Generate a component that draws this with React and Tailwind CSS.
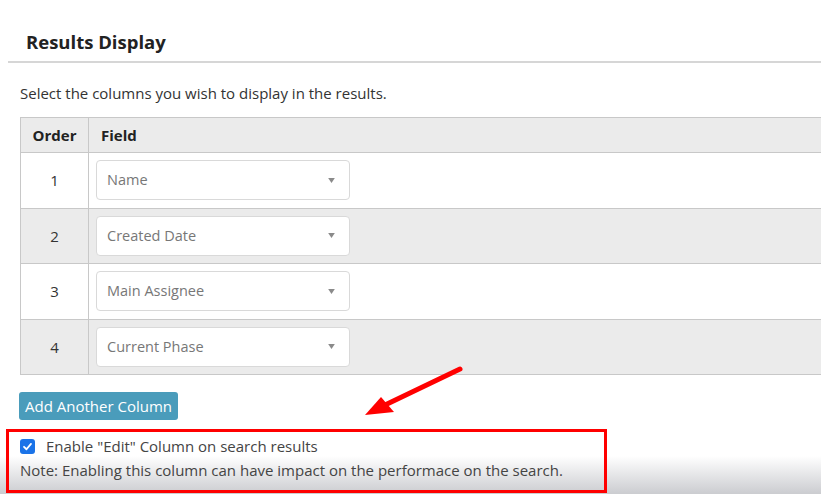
import { useState } from 'react';

const rows = [
  { order: 1, field: 'Name' },
  { order: 2, field: 'Created Date' },
  { order: 3, field: 'Main Assignee' },
  { order: 4, field: 'Current Phase' },
];

const FieldSelect = ({ value }) => (
  <div className="w-[254px] h-[40px] bg-white border border-[#d9d9d9] rounded-[4px] flex items-center justify-between pl-[10px] pr-[14px] text-[14.5px] text-[#777]">
    <span>{value}</span>
    <svg width="7" height="5" viewBox="0 0 8 6">
      <path d="M0 0 L8 0 L4 6 Z" fill="#8a8a8a" />
    </svg>
  </div>
);

export default function App() {
  const [editCol, setEditCol] = useState(true);

  return (
    <div
      className="relative w-[821px] h-[494px] overflow-hidden bg-white text-[#333]"
      style={{ fontFamily: '"Open Sans", "Liberation Sans", sans-serif' }}
    >
      {/* bottom shade */}
      <div className="pointer-events-none absolute left-0 right-0 bottom-0 h-[38px] bg-gradient-to-b from-transparent to-[#cbccd0]" />

      <div className="relative">
        {/* heading */}
        <div className="pl-[8px] pt-[30px]">
          <h2 className="pl-[18px] text-[18.5px] font-bold text-[#222] leading-[24px]">Results Display</h2>
          <div className="mt-[7px] h-[2px] bg-[#d6d6d6]" />
        </div>

        <div className="pl-[20px]">
          <p className="mt-[21px] text-[15px] leading-[18px] text-[#333]">
            Select the columns you wish to display in the results.
          </p>

          {/* columns table */}
          <div className="mt-[15px] w-[830px] border-t border-l border-[#c8c8c8]">
            <div className="flex h-[35px] bg-[#ebebeb] border-b border-[#c8c8c8] text-[15px] font-bold text-[#222]">
              <div className="w-[68px] border-r border-[#c8c8c8] flex items-center justify-center">Order</div>
              <div className="flex-1 flex items-center pl-[12px]">Field</div>
            </div>
            {rows.map((r, i) => (
              <div
                key={r.order}
                className={`flex h-[55.5px] border-b border-[#c8c8c8] ${i % 2 === 1 ? 'bg-[#ebebeb]' : 'bg-white'}`}
              >
                <div className="w-[68px] border-r border-[#c8c8c8] flex items-center justify-center text-[15px] text-[#333]">
                  {r.order}
                </div>
                <div className="flex-1 flex items-center pl-[7px]">
                  <FieldSelect value={r.field} />
                </div>
              </div>
            ))}
          </div>

          <button className="mt-[17px] -ml-[1px] h-[28px] w-[159px] rounded-[3px] bg-[#4a9cbb] text-white text-[15px] leading-none">
            Add Another Column
          </button>

          <label className="mt-[17px] flex items-center gap-[11px] text-[15px] leading-[18px] text-[#444] cursor-pointer" onClick={() => setEditCol(!editCol)}>
            <span className={`w-[15px] h-[15px] rounded-[3px] flex items-center justify-center ${editCol ? 'bg-[#1a73e8]' : 'bg-white border border-[#777]'}`}>
              {editCol && (
                <svg width="11" height="11" viewBox="0 0 12 12">
                  <path d="M2.2 6.3 L4.9 9 L9.8 3.2" fill="none" stroke="white" strokeWidth="2" strokeLinecap="round" strokeLinejoin="round" />
                </svg>
              )}
            </span>
            Enable "Edit" Column on search results
          </label>

          <p className="mt-[6px] text-[15px] leading-[18px] text-[#444]">
            Note: Enabling this column can have impact on the performace on the search.
          </p>
        </div>
      </div>

      {/* annotation box */}
      <div className="pointer-events-none absolute left-[6px] top-[429px] w-[601px] h-[64px] border-[3px] border-[#ff0000]" />

      {/* annotation arrow */}
      <svg className="pointer-events-none absolute left-0 top-0" width="821" height="494">
        <line x1="460" y1="369" x2="385" y2="405" stroke="#ff0000" strokeWidth="5" strokeLinecap="round" />
        <path d="M365 415 L381 397 L394 412 Z" fill="#ff0000" />
      </svg>
    </div>
  );
}
